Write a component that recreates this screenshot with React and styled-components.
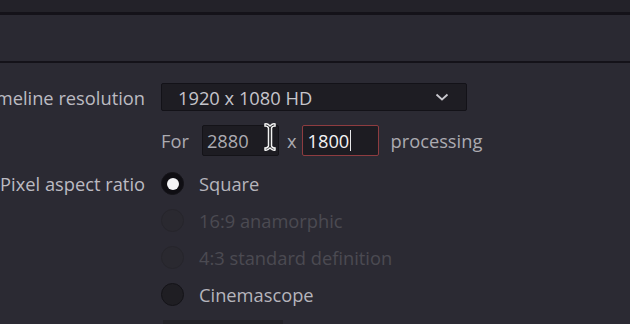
import React from "react";
import styled, { createGlobalStyle } from "styled-components";

const Global = createGlobalStyle`
  html, body { margin: 0; padding: 0; background: #2b2a33; overflow: hidden; }
  body { font-family: "Open Sans", "Noto Sans", sans-serif; }
`;

const FS = "18.3px";

const Page = styled.div`
  width: 630px;
  height: 324px;
  display: flex;
  flex-direction: column;
  background: #2b2a33;
  position: relative;
  overflow: hidden;
`;

const TopBar = styled.div`
  height: 12px;
  background: #232229;
`;

const Divider = styled.div`
  height: ${(p) => p.h}px;
  background: #141219;
`;

const Header = styled.div`
  height: 46px;
  background: #2a2932;
`;

const Form = styled.div`
  display: grid;
  grid-template-columns: 145px 1fr;
  column-gap: 16px;
  padding-top: 20px;
  align-items: center;
`;

const Label = styled.div`
  display: flex;
  justify-content: flex-end;
  white-space: nowrap;
  font-size: ${FS};
  color: #bcbbc2;
  height: ${(p) => p.h}px;
  align-items: center;
  align-self: ${(p) => p.self || "center"};
  margin-top: ${(p) => p.mt || 0}px;
`;

const Cell = styled.div`
  display: flex;
  align-items: center;
  height: ${(p) => p.h}px;
  margin-top: ${(p) => p.mt || 0}px;
`;

const Select = styled.div`
  width: 306px;
  height: 28px;
  box-sizing: border-box;
  background: #1e1d23;
  border: 1px solid #131218;
  border-radius: 2px;
  display: flex;
  align-items: center;
  justify-content: space-between;
  padding: 0 16px 0 16px;
  font-size: ${FS};
  color: #c6c5cb;
`;

const Text = styled.span`
  font-size: ${FS};
  color: ${(p) => p.c || "#acabb1"};
  margin: ${(p) => p.m || "0"};
`;

const Input = styled.div`
  width: 77px;
  height: 31px;
  box-sizing: border-box;
  background: #1d1c22;
  border: 1px solid ${(p) => (p.active ? "#8e3c40" : "#141318")};
  border-radius: 2px;
  display: flex;
  align-items: center;
  padding-left: 4px;
  font-size: ${FS};
  color: ${(p) => (p.active ? "#f2f2f4" : "#acabb1")};
  position: relative;
`;

const Caret = styled.span`
  display: inline-block;
  width: 1px;
  height: 21px;
  background: #e6e6e8;
  margin-left: 1px;
`;

const RadioList = styled.div`
  display: flex;
  flex-direction: column;
  margin-top: ${(p) => p.mt || 0}px;
`;

const RadioRow = styled.div`
  display: flex;
  align-items: center;
  height: 37px;
  gap: 15px;
  font-size: ${FS};
  color: ${(p) => (p.disabled ? "#4b4a52" : "#b6b5bc")};
`;

const Radio = styled.div`
  width: 23px;
  height: 23px;
  border-radius: 50%;
  box-sizing: border-box;
  margin-left: 0px;
  display: flex;
  align-items: center;
  justify-content: center;
  background: ${(p) => (p.checked ? "#0f0e13" : p.disabled ? "#2a2930" : "#1f1e23")};
  border: 1px solid ${(p) => (p.disabled ? "#26252b" : "#141318")};
  &::after {
    content: "";
    display: ${(p) => (p.checked ? "block" : "none")};
    width: 12px;
    height: 12px;
    border-radius: 50%;
    background: #f4f4f6;
  }
`;

const Cursor = styled.svg`
  position: absolute;
  left: 262px;
  top: 122px;
`;

const Bottom = styled.div`
  position: absolute;
  left: 163px;
  top: 320px;
  width: 120px;
  height: 6px;
  background: #242329;
`;

export default function App() {
  return (
    <>
      <Global />
      <Page>
        <TopBar />
        <Divider h={3} />
        <Header />
        <Divider h={2} />
        <Form>
          <Label h={28}>Timeline resolution</Label>
          <Cell h={28}>
            <Select>
              <span>1920 x 1080 HD</span>
              <svg width="16" height="10" viewBox="0 0 16 10">
                <path d="M2.5 2.5 L8 7.5 L13.5 2.5" fill="none" stroke="#c9c8ce" strokeWidth="1.8" />
              </svg>
            </Select>
          </Cell>
          <div />
          <Cell h={31} mt={14}>
            <Text m="0 13px 0 0">For</Text>
            <Input>2880</Input>
            <Text m="0 6px 0 8px">x</Text>
            <Input active>
              1800
              <Caret />
            </Input>
            <Text m="0 0 0 11px">processing</Text>
          </Cell>
          <Label h={37} self="start" mt={9}>
            Pixel aspect ratio
          </Label>
          <RadioList mt={9}>
            <RadioRow>
              <Radio checked />
              Square
            </RadioRow>
            <RadioRow disabled>
              <Radio disabled />
              16:9 anamorphic
            </RadioRow>
            <RadioRow disabled>
              <Radio disabled />
              4:3 standard definition
            </RadioRow>
            <RadioRow>
              <Radio />
              Cinemascope
            </RadioRow>
          </RadioList>
        </Form>
        <Cursor width="16" height="30" viewBox="0 0 16 30">
          <path
            d="M3 2 Q5 1 8 4 Q11 1 13 2 L13 4 Q10 4 9.5 6 L9.5 24 Q10 26 13 26 L13 28 Q11 29 8 26 Q5 29 3 28 L3 26 Q6 26 6.5 24 L6.5 6 Q6 4 3 4 Z"
            fill="#111015"
            stroke="#f2f2f2"
            strokeWidth="1.5"
          />
        </Cursor>
        <Bottom />
      </Page>
    </>
  );
}
